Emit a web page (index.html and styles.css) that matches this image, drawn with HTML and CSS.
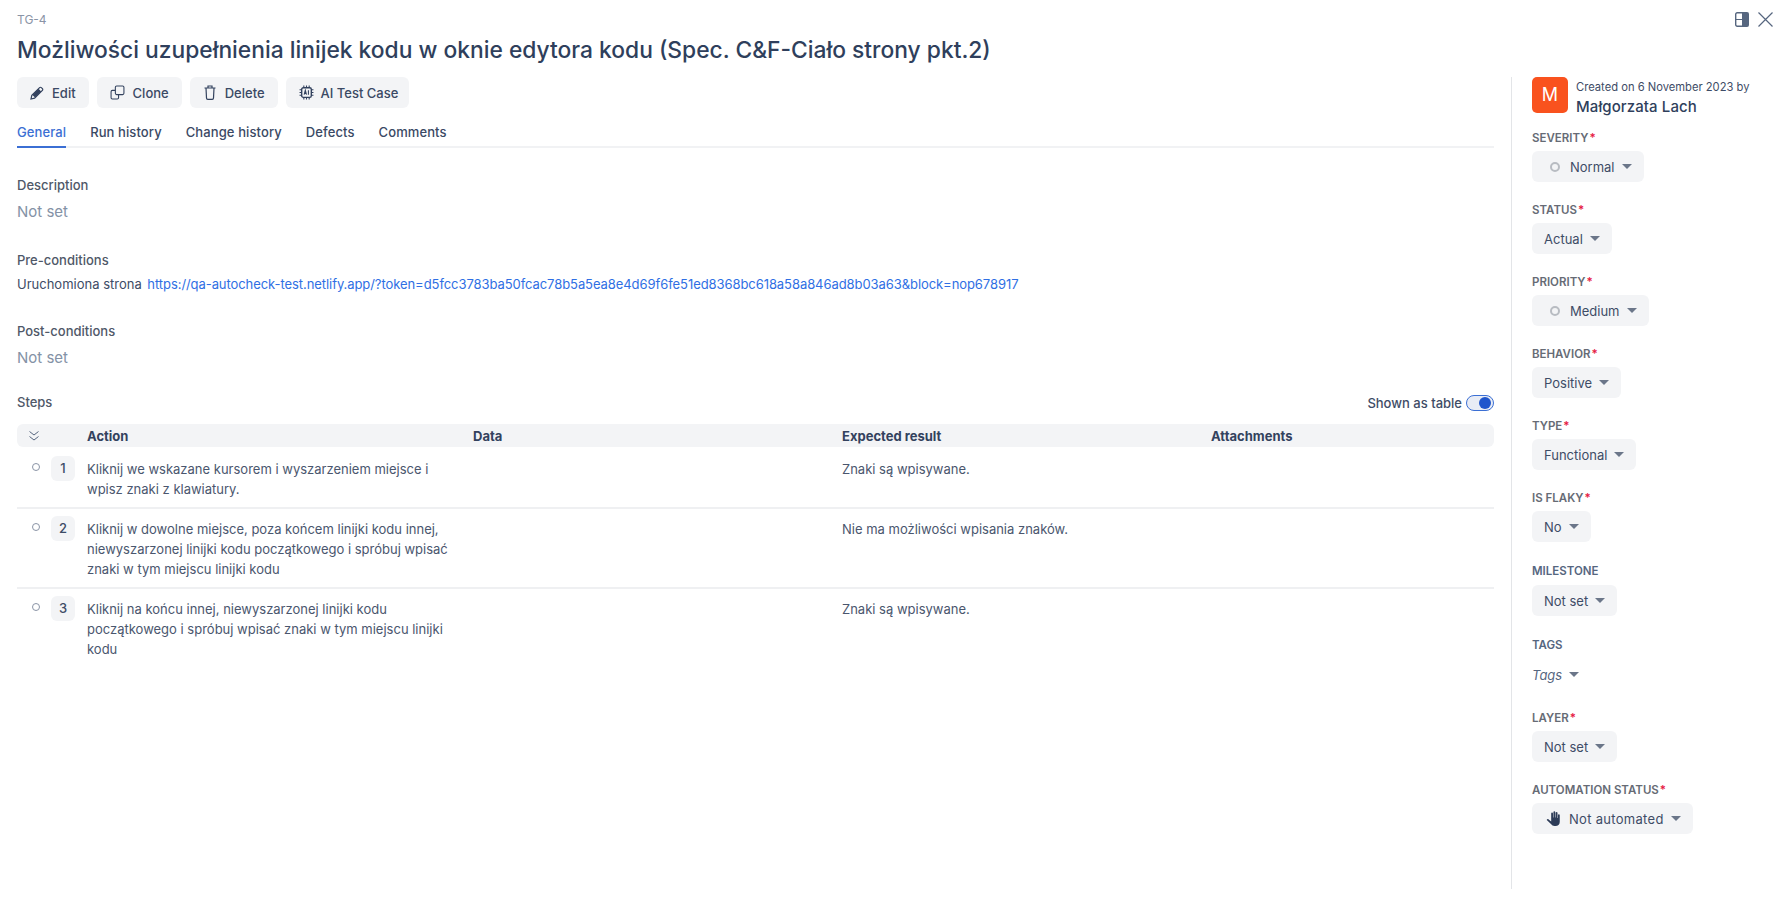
FILE: index.html
```html
<!DOCTYPE html>
<html lang="en">
<head>
    <meta charset="UTF-8">
    <title>TG-4</title>
    <link rel="stylesheet" href="styles.css">
</head>
<body>
    <header class="top">
        <div>
            <div class="case-id">TG-4</div>
            <h1>Możliwości uzupełnienia linijek kodu w oknie edytora kodu (Spec. C&amp;F-Ciało strony pkt.2)</h1>
        </div>
        <div class="top-icons">
            <svg width="14" height="15" viewBox="0 0 14 15"><rect x="0.7" y="0.7" width="12.6" height="13.6" rx="1.5" fill="none" stroke="#56667f" stroke-width="1.4"/><rect x="7" y="0.7" width="6.3" height="13.6" fill="#56667f"/><path d="M0 7.500h8" stroke="#56667f" stroke-width="1"/></svg>
            <svg width="15" height="15" viewBox="0 0 15 15"><path d="M0.500 0.500l14 14M14.500 0.500l-14 14" stroke="#56667f" stroke-width="1.200" fill="none"/></svg>
        </div>
    </header>

    <div class="layout">
        <main>
            <div class="actions">
                <button class="btn btn-edit">
                    <svg width="14" height="14" viewBox="0 0 14 14"><path d="M1 13l.8-3.600L9.600 1.600a1.200 1.200 0 0 1 1.700 0l1.100 1.100a1.200 1.200 0 0 1 0 1.700L4.600 12.200z" fill="none" stroke="#33425e" stroke-width="1.200"/><path d="M8.500 2.800l2.700 2.700L5 11.600 2.400 9z" fill="#33425e"/></svg>
                    Edit
                </button>
                <button class="btn btn-clone">
                    <svg width="15" height="15" viewBox="0 0 14 14" fill="none" stroke="#33425e" stroke-width="1"><rect x="5" y="1" width="8" height="8" rx="1.200"/><path d="M5 5H2.200A1.200 1.200 0 0 0 1 6.200v5.600A1.200 1.200 0 0 0 2.200 13h4.600A1.200 1.200 0 0 0 8 11.800V9"/></svg>
                    Clone
                </button>
                <button class="btn btn-delete">
                    <svg width="14" height="15" viewBox="0 0 14 15" fill="none" stroke="#33425e" stroke-width="1.200"><path d="M1.500 3h11M5 3V1h4v2M3 3l.5 10a1.300 1.300 0 0 0 1.300 1.300h4.400A1.300 1.300 0 0 0 10.500 13L11 3"/></svg>
                    Delete
                </button>
                <button class="btn btn-ai">
                    <svg width="15" height="15" viewBox="0 0 14 14" fill="none" stroke="#33425e" stroke-width="1"><rect x="2.500" y="2.500" width="9" height="9" rx="1.500" stroke-width="1.300"/><path d="M4.500 0.500v2M7 0.500v2M9.500 0.500v2M4.500 11.500v2M7 11.500v2M9.500 11.500v2M0.500 4.500h2M0.500 7h2M0.500 9.500h2M11.500 4.500h2M11.500 7h2M11.500 9.500h2M4.800 9l1.100-4 1.100 4M5.300 7.800h1.200M8.800 5v4"/></svg>
                    AI Test Case
                </button>
            </div>

            <nav class="tabs">
                <a href="#" class="active">General</a>
                <a href="#">Run history</a>
                <a href="#">Change history</a>
                <a href="#">Defects</a>
                <a href="#">Comments</a>
            </nav>

            <section class="block block-desc">
                <h3>Description</h3>
                <p class="not-set">Not set</p>
            </section>

            <section class="block block-pre">
                <h3>Pre-conditions</h3>
                <p class="plain">Uruchomiona strona <a href="#">https://qa-autocheck-test.netlify.app/?token=d5fcc3783ba50fcac78b5a5ea8e4d69f6fe51ed8368bc618a58a846ad8b03a63&amp;block=nop678917</a></p>
            </section>

            <section class="block block-post">
                <h3>Post-conditions</h3>
                <p class="not-set">Not set</p>
            </section>

            <div class="steps-head">
                <h3>Steps</h3>
                <div class="toggle-wrap">
                    Shown as table
                    <span class="toggle"><span class="knob"></span></span>
                </div>
            </div>

            <div class="steps">
                <div class="row head">
                    <div class="cell-toggle">
                        <svg width="12" height="12" viewBox="0 0 12 12" fill="none" stroke="#56667f" stroke-width="1"><path d="M1.500 1.500L6 5l4.500-3.500M1.500 6.500L6 10l4.500-3.500"/></svg>
                    </div>
                    <div>Action</div>
                    <div>Data</div>
                    <div>Expected result</div>
                    <div>Attachments</div>
                </div>
                <div class="row">
                    <div class="cell-toggle"><span class="circle"></span><span class="num">1</span></div>
                    <div class="text">Kliknij we wskazane kursorem i wyszarzeniem miejsce i wpisz znaki z klawiatury.</div>
                    <div></div>
                    <div class="text">Znaki są wpisywane.</div>
                    <div></div>
                </div>
                <div class="row">
                    <div class="cell-toggle"><span class="circle"></span><span class="num">2</span></div>
                    <div class="text">Kliknij w dowolne miejsce, poza końcem linijki kodu innej, niewyszarzonej linijki kodu początkowego i spróbuj wpisać znaki w tym miejscu linijki kodu</div>
                    <div></div>
                    <div class="text">Nie ma możliwości wpisania znaków.</div>
                    <div></div>
                </div>
                <div class="row">
                    <div class="cell-toggle"><span class="circle"></span><span class="num">3</span></div>
                    <div class="text">Kliknij na końcu innej, niewyszarzonej linijki kodu początkowego i spróbuj wpisać znaki w tym miejscu linijki kodu</div>
                    <div></div>
                    <div class="text">Znaki są wpisywane.</div>
                    <div></div>
                </div>
            </div>
        </main>

        <aside>
            <div class="author">
                <div class="avatar">M</div>
                <div>
                    <div class="created">Created on 6 November 2023 by</div>
                    <div class="name">Małgorzata Lach</div>
                </div>
            </div>

            <div class="field">
                <label>SEVERITY<em>*</em></label>
                <div class="select"><span class="dot"></span>Normal<span class="caret"></span></div>
            </div>
            <div class="field">
                <label>STATUS<em>*</em></label>
                <div class="select">Actual<span class="caret"></span></div>
            </div>
            <div class="field">
                <label>PRIORITY<em>*</em></label>
                <div class="select"><span class="dot"></span>Medium<span class="caret"></span></div>
            </div>
            <div class="field">
                <label>BEHAVIOR<em>*</em></label>
                <div class="select">Positive<span class="caret"></span></div>
            </div>
            <div class="field">
                <label>TYPE<em>*</em></label>
                <div class="select">Functional<span class="caret"></span></div>
            </div>
            <div class="field">
                <label>IS FLAKY<em>*</em></label>
                <div class="select">No<span class="caret"></span></div>
            </div>
            <div class="field field-plain">
                <label class="blue">MILESTONE</label>
                <div class="select">Not set<span class="caret"></span></div>
            </div>
            <div class="field field-plain">
                <label class="blue">TAGS</label>
                <div class="select select-tags">Tags<span class="caret"></span></div>
            </div>
            <div class="field">
                <label>LAYER<em>*</em></label>
                <div class="select">Not set<span class="caret"></span></div>
            </div>
            <div class="field">
                <label>AUTOMATION STATUS<em>*</em></label>
                <div class="select select-auto">
                    <svg class="hand" width="16" height="15" viewBox="1 1.300 13 13.300" fill="#2d3c58"><path d="M5 3.500a.8.800 0 0 1 1.600 0V7h.4V2.300a.8.800 0 0 1 1.600 0V7h.4V3a.8.800 0 0 1 1.600 0v4.500h.4V5a.8.800 0 0 1 1.600 0v6c0 2.200-1.700 3.500-3.700 3.500H8c-1.500 0-2.300-.6-3.200-1.700L1.300 9.600c-.6-.8.500-1.700 1.200-1L5 10.500z"/></svg>
                    Not automated<span class="caret"></span>
                </div>
            </div>
        </aside>
    </div>
</body>
</html>
```

FILE: styles.css
```css
* {
    margin: 0;
    padding: 0;
    box-sizing: border-box;
    font-family: 'Inter', 'Liberation Sans', sans-serif;
}

html, body {
    height: 897px;
    overflow: hidden;
    background-color: white;
}

body {
    color: #33425e;
    font-size: 13px;
}

.top {
    display: flex;
    justify-content: space-between;
    align-items: flex-start;
    height: 77px;
    padding: 12px 9px 0 17px;
}

.case-id {
    font-size: 12px;
    line-height: 15px;
    color: #8a94a6;
}

h1 {
    font-size: 22.8px;
    font-weight: 500;
    line-height: 32px;
    margin-top: 7px;
    color: #2f3f5c;
}

.top-icons {
    display: flex;
    gap: 9px;
}

.layout {
    display: flex;
    height: 812px;
}

main {
    width: 1477px;
    margin-left: 17px;
}

aside {
    margin-left: 17px;
    flex: 1;
    border-left: 1px solid #e3e5e8;
    padding-left: 20px;
}

/* buttons */
.actions {
    display: flex;
    gap: 8px;
}

.btn {
    display: flex;
    align-items: center;
    gap: 8px;
    height: 31px;
    padding: 0 13px;
    border: none;
    border-radius: 6px;
    background-color: #f3f4f6;
    color: #3a4964;
    font-size: 13px;
    font-weight: 500;
}

.btn-ai {
    gap: 7px;
    padding-right: 11px;
}

/* tabs */
.tabs {
    display: flex;
    gap: 24px;
    height: 40px;
    padding-top: 14px;
    border-bottom: 2px solid #f1f2f4;
}

.tabs a {
    height: 26px;
    line-height: 20px;
    color: #3a4964;
    text-decoration: none;
    font-weight: 500;
    letter-spacing: 0.1px;
}

.tabs a.active {
    color: #3b6fd4;
    border-bottom: 2px solid #3b6fd4;
}

/* sections */
h3 {
    font-size: 13px;
    font-weight: 500;
    line-height: 20px;
    color: #4f5868;
}

.block-desc {
    margin-top: 27px;
}

.block-pre {
    margin-top: 28px;
}

.block-post {
    margin-top: 27px;
}

.not-set {
    font-size: 15px;
    line-height: 20px;
    margin-top: 7px;
    color: #8492a6;
}

.plain {
    line-height: 20px;
    margin-top: 4px;
    color: #3e4c66;
}

.plain a {
    margin-left: 2px;
    color: #2f6fe4;
    text-decoration: none;
    letter-spacing: -0.07px;
}

.steps-head {
    display: flex;
    justify-content: space-between;
    align-items: center;
    margin-top: 24px;
    height: 20px;
}

.toggle-wrap {
    display: flex;
    align-items: center;
    gap: 4px;
    margin-top: 2px;
    color: #3e4c66;
    font-weight: 500;
}

.toggle {
    display: flex;
    justify-content: flex-end;
    align-items: center;
    width: 28px;
    height: 16px;
    padding-right: 2px;
    border: 1px solid #3b6fd4;
    border-radius: 8px;
    background-color: #e8ecf5;
}

.knob {
    width: 12px;
    height: 12px;
    border-radius: 50%;
    background-color: #1f55cc;
}

/* steps table */
.steps {
    margin-top: 12px;
}

.row {
    display: grid;
    grid-template-columns: 70px 386px 369px 369px 1fr;
    padding: 10px 0 8px;
    border-bottom: 2px solid #eff0f2;
}

.row.head + .row {
    margin-top: 2px;
}

.row:last-child {
    border-bottom: none;
}

.row.head {
    height: 23px;
    padding: 0;
    align-items: center;
    border-bottom: none;
    border-radius: 6px;
    background-color: #f3f4f6;
    font-weight: 700;
    color: #33425e;
}

.head .cell-toggle {
    margin-top: 0;
    padding-left: 11px;
}

.cell-toggle {
    display: flex;
    align-items: flex-start;
    margin-top: -3px;
}

.circle {
    width: 8px;
    height: 8px;
    margin: 7px 0 0 15px;
    border: 1px solid #8a94a6;
    border-radius: 50%;
}

.num {
    width: 24px;
    height: 25px;
    margin-left: 11px;
    border-radius: 6px;
    background-color: #f3f4f6;
    text-align: center;
    line-height: 25px;
    font-weight: 500;
    color: #3e4c66;
}

.text {
    line-height: 20px;
    padding-right: 16px;
    color: #4a566e;
}

/* sidebar */
.author {
    display: flex;
    gap: 8px;
    height: 50px;
}

.avatar {
    width: 36px;
    height: 36px;
    border-radius: 5px;
    background-color: #f9521e;
    color: white;
    font-size: 18px;
    line-height: 36px;
    text-align: center;
}

.created {
    font-size: 11.2px;
    line-height: 20px;
    color: #3e4c66;
}

.name {
    font-size: 15px;
    font-weight: 500;
    line-height: 20px;
    letter-spacing: 0.1px;
    color: #2f3f5c;
}

.field {
    height: 72px;
}

.field-plain {
    height: 74px;
}

.field label {
    display: block;
    padding-top: 1px;
    font-size: 11.5px;
    font-weight: 600;
    line-height: 20px;
    color: #666b75;
    margin-bottom: 3px;
}

.field label.blue {
    padding-top: 2px;
    color: #56667f;
    margin-bottom: 4px;
}

.field em {
    color: #e5173f;
    font-style: normal;
    margin-left: 1px;
}

.select {
    display: inline-flex;
    align-items: center;
    height: 31px;
    padding: 0 12px;
    border-radius: 6px;
    background-color: #f3f4f6;
    color: #3e4c66;
    font-size: 13px;
}

.select-tags {
    padding-left: 0;
    background: none;
    font-style: italic;
    color: #56667f;
}

.select-auto {
    letter-spacing: 0.3px;
}

.dot {
    width: 10px;
    height: 10px;
    margin: 0 10px 0 6px;
    border: 2px solid #b8bcc2;
    border-radius: 50%;
}

.hand {
    margin: 0 7px 0 2px;
}

.caret {
    width: 0;
    height: 0;
    margin-left: 7px;
    border-left: 5px solid transparent;
    border-right: 5px solid transparent;
    border-top: 5px solid #6b7689;
}
```
